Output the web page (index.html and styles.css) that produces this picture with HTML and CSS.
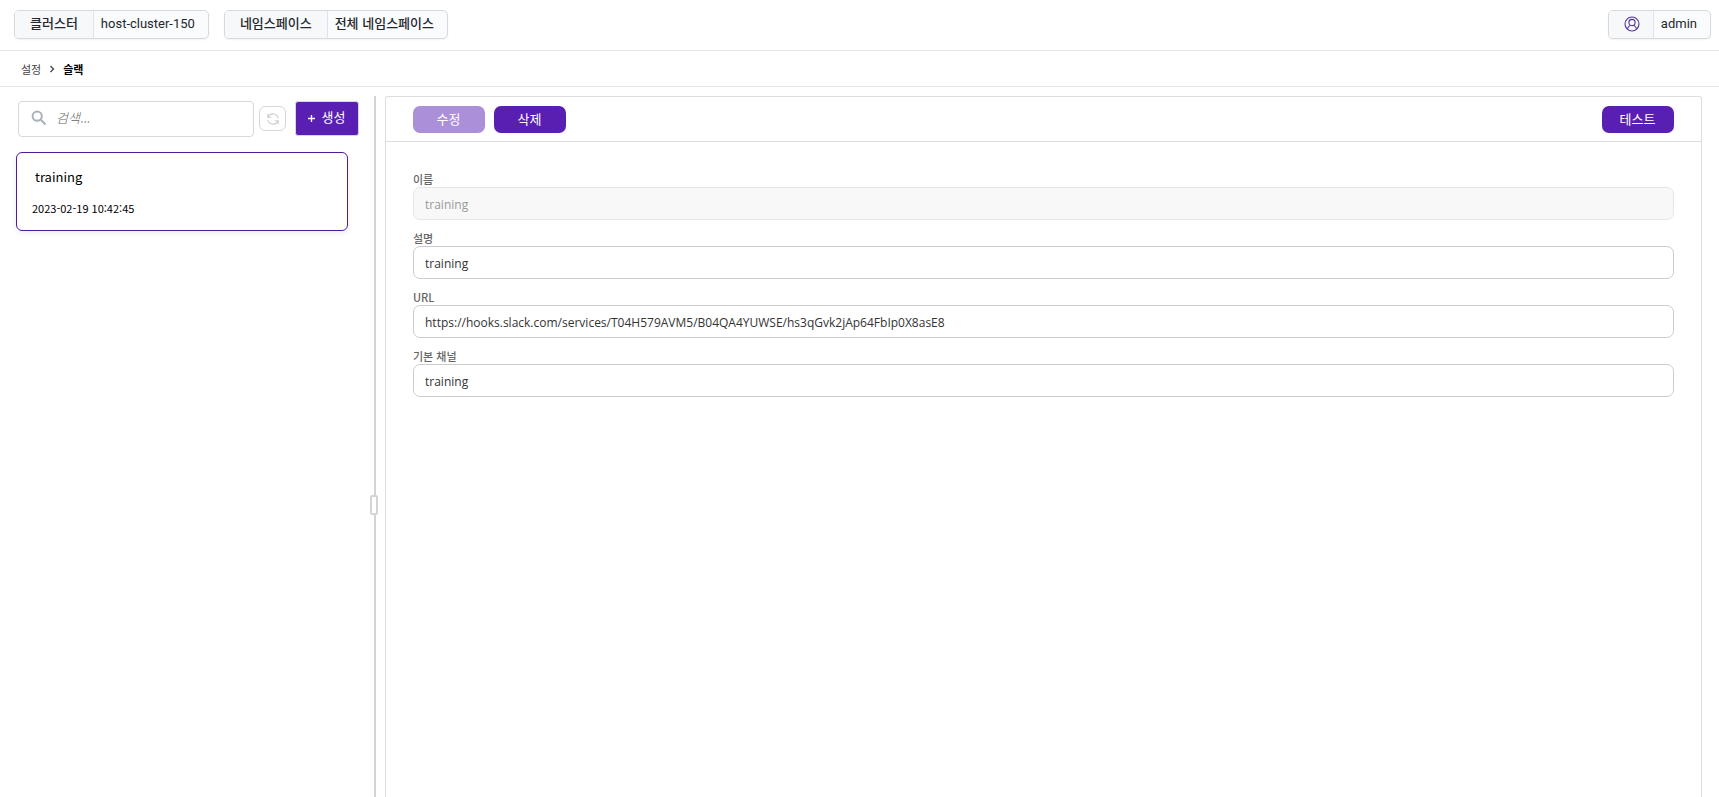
FILE: index.html
```html
<!DOCTYPE html>
<html lang="ko">
<head>
<meta charset="utf-8">
<title>슬랙 설정</title>
<link rel="stylesheet" href="styles.css">
</head>
<body>
<header class="topbar">
  <div class="chip chip-cluster"><span class="chip-key">클러스터</span><span class="chip-value latin">host-cluster-150</span></div>
  <div class="chip chip-namespace"><span class="chip-key">네임스페이스</span><span class="chip-value">전체 네임스페이스</span></div>
  <div class="chip chip-user">
    <span class="chip-key"><svg class="user-icon" viewBox="0 0 16 16" aria-hidden="true"><circle cx="8" cy="8" r="7"/><circle cx="8" cy="6.5" r="3.1"/><path d="M3.3 13.2c.6-2.3 1.600-3.200 2.900-4.100M12.700 13.200c-.6-2.300-1.600-3.200-2.900-4.100"/></svg></span>
    <span class="chip-value latin">admin</span>
  </div>
</header>
<nav class="breadcrumb">
  <a href="#">설정</a>
  <svg class="chevron" viewBox="0 0 6 8" aria-hidden="true"><path d="M1.500 1l3 3-3 3"/></svg>
  <strong>슬랙</strong>
</nav>
<div class="workspace">
  <aside class="sidebar">
    <div class="tools">
      <label class="search">
        <svg class="search-icon" viewBox="0 0 16 16" aria-hidden="true"><circle cx="6.200" cy="6.200" r="4.600"/><path d="M9.800 9.800l4.700 4.700"/></svg>
        <input type="text" placeholder="검색..." aria-label="검색">
      </label>
      <button class="refresh" type="button" aria-label="새로고침"><svg viewBox="0 0 16 16" aria-hidden="true"><path d="M2 2v4h4M2.300 5.800A6.200 6.200 0 0 1 14 7M14 14v-4h-4M13.700 10.200A6.200 6.200 0 0 1 2 9"/></svg></button>
      <button class="create" type="button"><svg viewBox="0 0 8 8" aria-hidden="true"><path d="M4 0v8M0 4h8"/></svg>생성</button>
    </div>
    <article class="card">
      <div class="card-name">training</div>
      <time class="card-time">2023-02-19 10:42:45</time>
    </article>
  </aside>
  <div class="splitter"><span class="handle"></span></div>
  <main class="panel">
    <div class="actions">
      <button class="btn" type="button" disabled>수정</button>
      <button class="btn" type="button">삭제</button>
      <button class="btn btn-test" type="button">테스트</button>
    </div>
    <form class="form">
      <label for="name">이름</label>
      <input id="name" type="text" value="training" disabled>
      <label for="desc">설명</label>
      <input id="desc" type="text" value="training">
      <label for="url">URL</label>
      <input id="url" type="text" value="https://hooks.slack.com/services/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">
      <label for="channel">기본 채널</label>
      <input id="channel" type="text" value="training">
    </form>
  </main>
</div>
</body>
</html>
```

FILE: styles.css
```css
* { box-sizing: border-box; }
body {
  margin: 0;
  min-height: 100vh;
  display: flex;
  flex-direction: column;
  background: #fff;
  color: #000;
  font: 13px/20px "Noto Sans CJK KR", sans-serif;
}
button, input { font: inherit; margin: 0; }
button { cursor: pointer; padding: 0; }
svg { fill: none; flex: none; }

.topbar {
  display: flex;
  align-items: center;
  gap: 15px;
  padding: 10px 8px 11px 14px;
  border-bottom: 1px solid #e3e4e6;
}
.chip {
  display: flex;
  height: 29px;
  border: 1px solid #d6d9dd;
  border-radius: 5px;
  background: #fafbfc;
  box-shadow: 0 1px 2px #0000000d;
  font-weight: 500;
  color: #24272c;
}
.chip-key {
  display: flex;
  align-items: center;
  justify-content: center;
  padding: 0 15px 4px;
  background: #f6f8fa;
  border-right: 1px solid #dfe4ec;
  border-radius: 4px 0 0 4px;
}
.chip-value { display: flex; align-items: center; padding: 0 13px 4px 7px; }
.latin { padding-bottom: 2px; font-family: Roboto, sans-serif; font-weight: 400; }
.chip-user { margin-left: auto; }
.chip-user .chip-key { padding: 0 13px 1px 15px; }
.user-icon { width: 16px; height: 16px; stroke: #53359a; stroke-width: 1.1; }

.breadcrumb {
  display: flex;
  align-items: center;
  gap: 8px;
  height: 36px;
  padding: 0 21px;
  border-bottom: 1px solid #e3e4e6;
  font-size: 11px;
}
.breadcrumb a { color: #444; text-decoration: none; }
.breadcrumb strong { font-weight: 700; }
.chevron { width: 6px; height: 8px; stroke: #444; stroke-width: 1.3; }

.workspace {
  flex: 1;
  display: grid;
  grid-template-columns: 370px 9px 1fr;
  padding: 9px 17px 0 0;
}
.sidebar { padding: 5px 11px 0 16px; }
.tools { display: flex; align-items: flex-start; padding-left: 2px; }
.search {
  flex: 1;
  min-width: 0;
  display: flex;
  align-items: center;
  gap: 9px;
  height: 36px;
  padding: 0 12px 2px;
  border: 1px solid #d8d9db;
  border-radius: 4px;
}
.search-icon { width: 16px; height: 16px; stroke: #a9b2bc; stroke-width: 2; }
.search input {
  width: 100%;
  padding: 0 0 1px;
  border: 0;
  outline: 0;
  background: none;
  font-style: italic;
  font-weight: 300;
}
.search input::placeholder { color: #666; }
.refresh {
  display: grid;
  place-items: center;
  width: 27px;
  height: 25px;
  margin: 5px 9px 0 5px;
  border: 1px solid #d6d6d6;
  border-radius: 6px;
  background: #fff;
}
.refresh svg { width: 14px; height: 14px; stroke: #ccc; stroke-width: 1.2; }
.create {
  display: flex;
  align-items: center;
  justify-content: center;
  gap: 7px;
  width: 64px;
  height: 35px;
  padding: 0 1px 3px 0;
  border: 1px solid #d9d3e3;
  border-radius: 3px;
  background: #591fb3;
  color: #fff;
}
.create svg { width: 7px; height: 7px; margin-top: 3px; stroke: #fff; stroke-width: 1.5; }
.card {
  margin: 15px 11px 0 0;
  padding: 14px 15px 12px;
  border: 1px solid #4d1c9a;
  border-radius: 6px;
  box-shadow: 0 2px 6px #00000014;
}
.card-name { padding-left: 3px; margin-bottom: 11px; }
.card-time { display: block; font-size: 11px; }

.splitter {
  display: flex;
  align-items: center;
  background: linear-gradient(#d3d4d5, #d3d4d5) 4px 0 / 2px 100% no-repeat;
}
.handle {
  width: 8px;
  height: 20px;
  margin-top: 117px;
  border: 2px solid #d3d4d5;
  border-radius: 2px;
  background: #fff;
}
.panel {
  margin-left: 6px;
  border: 1px solid #dedede;
  border-bottom: 0;
  border-radius: 3px 3px 0 0;
}
.actions {
  display: flex;
  gap: 9px;
  padding: 9px 27px 8px;
  border-bottom: 1px solid #dedede;
}
.btn {
  width: 72px;
  height: 27px;
  padding: 0 1px 1px 0;
  border: 0;
  border-radius: 7px;
  background: #591fb3;
  color: #fff;
}
.btn:disabled { background: #ac8fd9; }
.btn-test { margin-left: auto; }
.form { display: flex; flex-direction: column; padding: 29px 27px; }
.form label { font-size: 11px; font-weight: 500; line-height: 16px; color: #666; }
.form input {
  height: 33px;
  margin-bottom: 10px;
  padding: 1px 11px 0;
  border: 1px solid #ccc;
  border-radius: 7px;
  background: #fff;
  color: #333;
  font-family: "Open Sans", "Noto Sans CJK KR", sans-serif;
  font-size: 12px;
}
.form input:disabled { background: #f8f8f8; border-color: #e6e6e6; color: #999; }
```
